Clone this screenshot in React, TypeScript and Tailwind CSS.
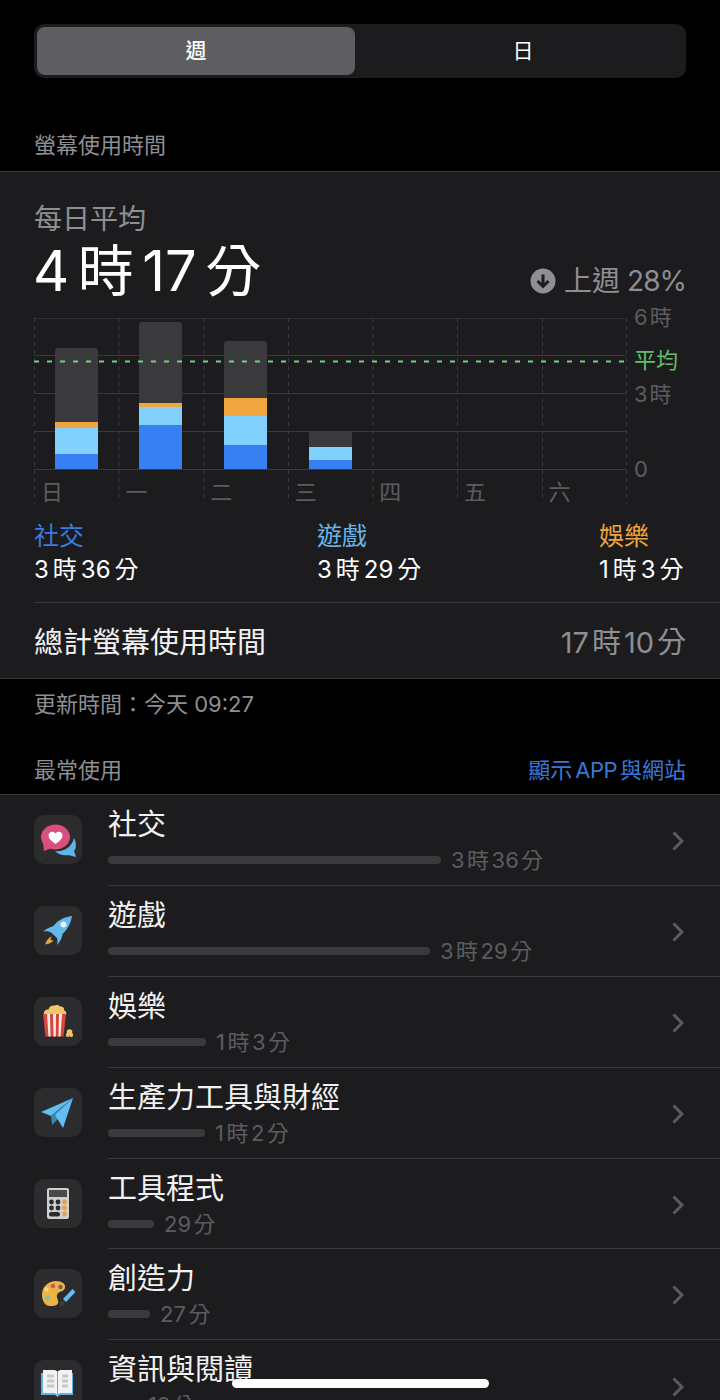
const font = "font-['Inter','Noto_Sans_CJK_TC',sans-serif]";

const bars = [
  { top: 74, orange: 6, sky: 26, blue: 15 },
  { top: 81, orange: 4, sky: 18, blue: 44 },
  { top: 57, orange: 18, sky: 29, blue: 24 },
  { top: 16, orange: 0, sky: 13, blue: 9 },
];

const days = ["日", "一", "二", "三", "四", "五", "六"];

const gridX = [0, 84.5, 169.5, 254, 338.5, 423, 508, 592];

// iOS puts a small gap between digits and CJK text
function Time({ text, gap }: { text: string; gap: string }) {
  const parts = text.match(/\d+|[^\d]+/g) ?? [];
  return (
    <>
      {parts.map((p, i) => (
        <span key={i} className={i > 0 ? gap : ""}>
          {p}
        </span>
      ))}
    </>
  );
}

function ChartLines() {
  return (
    <svg width="593" height="186" className="absolute left-0 top-0">
      <line x1="0" x2="592" y1="0.5" y2="0.5" stroke="#2e2e30" />
      {[37.5, 75.5, 113.5, 151.5].map((y) => (
        <line key={y} x1="0" x2="592" y1={y} y2={y} stroke="#3a3a3c" />
      ))}
      {gridX.map((x) => (
        <line key={x} x1={x + 0.5} x2={x + 0.5} y1="0" y2="185" stroke="#3a3a3c" strokeDasharray="4 4" />
      ))}
    </svg>
  );
}

function AvgLine() {
  return (
    <svg width="593" height="3" className="absolute left-0 top-[42px]">
      <line x1="0" x2="592" y1="1.5" y2="1.5" stroke="#72d47a" strokeWidth="2" strokeDasharray="5 8" />
    </svg>
  );
}

function Chart() {
  return (
    <div className="relative mt-[14px] ml-[34px] h-[186px] w-[660px]">
      <ChartLines />
      <div className="absolute left-0 top-0 flex h-[151px] w-[592px] items-end">
        {bars.map((b, i) => (
          <div key={i} className="flex w-[84.6px] justify-center">
            <div className="flex w-[43px] flex-col overflow-hidden rounded-t-[3px]">
              <div className="bg-[#3a3a3c]" style={{ height: b.top }} />
              <div className="bg-[#f0a63e]" style={{ height: b.orange }} />
              <div className="bg-[#82d0fe]" style={{ height: b.sky }} />
              <div className="bg-[#3780f4]" style={{ height: b.blue }} />
            </div>
          </div>
        ))}
      </div>
      <AvgLine />
      <div className="absolute left-0 top-[161px] flex w-[592px] text-[22px] leading-[26px] text-[#5c5c60]">
        {days.map((d) => (
          <div key={d} className="w-[84.6px] pl-[7px]">
            {d}
          </div>
        ))}
      </div>
      <span className="absolute left-[600px] top-[-14px] text-[22px] leading-[26px] text-[#5c5c60]">
        <Time text="6時" gap="ml-[2px]" />
      </span>
      <span className="absolute left-[600px] top-[29px] text-[22px] leading-[26px] text-[#66bb6a]">平均</span>
      <span className="absolute left-[600px] top-[63px] text-[22px] leading-[26px] text-[#5c5c60]">
        <Time text="3時" gap="ml-[2px]" />
      </span>
      <span className="absolute left-[600px] top-[138px] text-[22px] leading-[26px] text-[#5c5c60]">0</span>
    </div>
  );
}

function Legend({ name, value, color, className }: { name: string; value: string; color: string; className: string }) {
  return (
    <div className={className}>
      <div className={`text-[25px] leading-[32px] ${color}`}>{name}</div>
      <div className="text-[24px] leading-[36px] text-white">
        <Time text={value} gap="ml-[4px]" />
      </div>
    </div>
  );
}

function SocialIcon() {
  return (
    <svg width="48" height="48" viewBox="0 0 48 48">
      <path d="M40 23C43 28 42 35 40 36L42 42L34 40C30 41 25 40 21 36C30 37 38 32 40 23z" fill="#5cb6ea" />
      <ellipse cx="21.500" cy="22" rx="14.500" ry="12.500" fill="#d94f7d" />
      <path d="M9 28L10 36L18 33z" fill="#d94f7d" />
      <path d="M21.500 29C17 26 14.500 23.500 14.500 20.500C14.500 16.500 19.500 15.500 21.500 18.500C23.500 15.500 28.500 16.500 28.500 20.500C28.500 23.500 26 26 21.500 29z" fill="#fff" />
    </svg>
  );
}

function RocketIcon() {
  return (
    <svg width="48" height="48" viewBox="0 0 48 48">
      <path d="M38 10C30 11 24 14 19.500 20C16 21 12 23 9 25.500C12 25 15 25.500 17 26.500L23 32C23.500 34 23.500 37 23 39C26 36 28 32 28.500 28C34 23 37 17 38 10z" fill="#62b8ea" />
      <circle cx="29.500" cy="18.500" r="3" fill="#e6f5ff" />
      <path d="M17.500 30.500C15 31.500 12.500 34 11 38.500C14 38 17 37.500 19.500 34.500L16.500 34z" fill="#dca640" />
    </svg>
  );
}

function PopcornIcon() {
  return (
    <svg width="48" height="48" viewBox="0 0 48 48">
      <path d="M10 18C9 14 12 12 14.500 12.500C15 9.500 18 8 20.500 8.500C22 7.500 25 8 26.500 9.500C29 9.500 30.500 11 30 13C32 14 33 16 32 18z" fill="#f1c668" />
      <path d="M9 17H32L29.500 39.500H11.500z" fill="#d9463f" />
      <path d="M13 17H16L16.500 39.500H14.500zM19 17H22L21.800 39.500H19.500zM25 17H28L26.500 39.500H24.500z" fill="#f8ece4" />
      <circle cx="35.500" cy="35" r="2.800" fill="#f1c668" />
      <circle cx="33.800" cy="38" r="2" fill="#f1c668" />
      <circle cx="37.200" cy="38" r="2" fill="#f1c668" />
    </svg>
  );
}

function PlaneIcon() {
  return (
    <svg width="48" height="48" viewBox="0 0 48 48">
      <path d="M39 10L7 24L17 28z" fill="#62bdf0" />
      <path d="M39 10L17 28L18 37L23 32z" fill="#3d86ad" />
      <path d="M39 10L21 27L29 40z" fill="#62bdf0" />
    </svg>
  );
}

function CalcIcon() {
  return (
    <svg width="48" height="48" viewBox="0 0 48 48">
      <rect x="13" y="9" width="22" height="31" rx="2" fill="#cfcfcf" />
      <rect x="15" y="11" width="18" height="7" fill="#4a4a4c" />
      {[23, 29].map((y) =>
        [17.5, 24].map((x) => <circle key={`${x}-${y}`} cx={x} cy={y} r="2.400" fill="#2c2c2e" />)
      )}
      {[23, 29, 35].map((y) => (
        <circle key={y} cx="30.500" cy={y} r="2.400" fill="#e8a24c" />
      ))}
      <rect x="15" y="33" width="11" height="4.500" rx="2" fill="#2c2c2e" />
    </svg>
  );
}

function PaletteIcon() {
  return (
    <svg width="48" height="48" viewBox="0 0 48 48">
      <path d="M8 26C8 17 15 12 22 12C28 12 32 15 31 19C30 23 24 22 23 26C22 29 25 31 24 34C23 37 19 37 16 37C11 37 8 32 8 26z" fill="#edb349" />
      <circle cx="19" cy="17" r="2.200" fill="#d9534f" />
      <circle cx="12.500" cy="20.500" r="2.200" fill="#f5d76e" />
      <circle cx="13.500" cy="29" r="2.400" fill="#7fc4b4" />
      <circle cx="26.500" cy="18" r="2.200" fill="#6a6a6a" />
      <path d="M38.500 20L41.500 23L32 33L29 30z" fill="#62bdf0" />
      <path d="M25.500 37L27 31.500L30.500 34L29 36.500z" fill="#3f3f41" />
    </svg>
  );
}

function BookIcon() {
  return (
    <svg width="48" height="48" viewBox="0 0 48 48">
      <path d="M7 13H39V35H26L23.500 37L21 35H7z" fill="#62b0dc" />
      <path d="M9 10H20C22 10 23 11 23.500 12C24 11 25 10 27 10H38V33H26L23.500 34.500L21 33H9z" fill="#f2f2f2" />
      <path d="M13 16H20M13 21H20M13 26H20M28 16H34M28 21H34M28 26H34" stroke="#c8c8cc" strokeWidth="3" />
      <path d="M23.500 12V34" stroke="#9a9a9e" strokeWidth="1" />
    </svg>
  );
}

const rows = [
  { name: "社交", time: "3時36分", w: 333, icon: <SocialIcon /> },
  { name: "遊戲", time: "3時29分", w: 322, icon: <RocketIcon /> },
  { name: "娛樂", time: "1時3分", w: 98, icon: <PopcornIcon /> },
  { name: "生產力工具與財經", time: "1時2分", w: 97, icon: <PlaneIcon /> },
  { name: "工具程式", time: "29分", w: 46, icon: <CalcIcon /> },
  { name: "創造力", time: "27分", w: 42, icon: <PaletteIcon /> },
  { name: "資訊與閱讀", time: "19分", w: 30, icon: <BookIcon /> },
];

function Row({ name, time, w, icon, last }: { name: string; time: string; w: number; icon: React.ReactNode; last: boolean }) {
  return (
    <div className="flex h-[90.9px] shrink-0 pl-[34px]">
      <div className="mt-[20px] h-[49px] w-[48px] shrink-0 overflow-hidden rounded-[10px] bg-[#2c2c2e]">{icon}</div>
      <div className={`ml-[26px] flex flex-1 items-center justify-between pr-[36px] ${last ? "" : "border-b border-[#38383a]"}`}>
        <div className="self-start">
          <div className="mt-[12px] text-[29px] leading-[36px] text-[#f2f2f2]">{name}</div>
          <div className="mt-[4px] flex items-center gap-[10px]">
            <div className="h-[8px] rounded-full bg-[#3a3a3c]" style={{ width: w }} />
            <span className="text-[22px] leading-[26px] text-[#5c5c60]">
              <Time text={time} gap="ml-[2.5px]" />
            </span>
          </div>
        </div>
        <svg width="12" height="20" viewBox="0 0 12 20" fill="none" stroke="#5c5c60" strokeWidth="3" className="mt-[2px]">
          <path d="M1.500 1.500L10 10l-8.500 8.500" />
        </svg>
      </div>
    </div>
  );
}

export default function App() {
  return (
    <div className={`relative h-[1400px] w-[720px] overflow-hidden bg-black ${font}`}>
      <div className="px-[34px] pt-[24px]">
        <div className="flex h-[54px] rounded-[10px] bg-[#1c1c1e] p-[3px]">
          <div className="flex w-[318px] items-center justify-center rounded-[8px] bg-[#5e5e62] text-[21px] font-medium text-white">週</div>
          <div className="flex flex-1 items-center justify-center pl-[8px] text-[21px] text-white">日</div>
        </div>
      </div>

      <div className="mt-[52px] h-[41px] px-[34px] text-[22px] leading-[30px] text-[#8e8e93]">螢幕使用時間</div>

      <div className="h-[508px] border-y border-[#38383a] bg-[#1c1c1e]">
        <div className="px-[34px] pt-[29px] text-[28px] leading-[36px] text-[#8e8e93]">每日平均</div>
        <div className="mt-[1px] flex items-end justify-between px-[34px]">
          <div className="-ml-[1px] text-[56px] leading-[66px] text-white">
            <Time text="4時17分" gap="ml-[8.5px]" />
          </div>
          <div className="flex items-center gap-[8px] pb-[5px] text-[28px] leading-[36px] text-[#8e8e93]">
            <svg width="26" height="26" viewBox="0 0 26 26">
              <circle cx="13" cy="13" r="12.500" fill="#8e8e93" />
              <path d="M13 6.500v12M7.500 13l5.500 5.500 5.500-5.500" fill="none" stroke="#1c1c1e" strokeWidth="3" />
            </svg>
            <span>
              上週<span className="ml-[7px] tracking-[-1px]">28%</span>
            </span>
          </div>
        </div>
        <Chart />
        <div className="relative mt-[16px] ml-[34px] h-[83px] border-b border-[#38383a]">
          <Legend name="社交" value="3時36分" color="text-[#3a7bdc]" className="absolute left-0 top-0" />
          <Legend name="遊戲" value="3時29分" color="text-[#6bb5e6]" className="absolute left-[283px] top-0" />
          <Legend name="娛樂" value="1時3分" color="text-[#eea33c]" className="absolute left-[565px] top-0" />
        </div>
        <div className="flex h-[75px] items-center justify-between px-[34px] pt-[4px] text-[29px]">
          <span className="text-[#f2f2f2]">總計螢幕使用時間</span>
          <span className="text-[#8e8e93]">
            <Time text="17時10分" gap="ml-[3px]" />
          </span>
        </div>
      </div>

      <div className="h-[66px] px-[34px] pt-[10px] text-[22px] leading-[30px] text-[#8e8e93]">更新時間：今天 09:27</div>

      <div className="flex h-[49px] items-start justify-between px-[34px] pt-[10px] text-[22px] leading-[30px]">
        <span className="text-[#8e8e93]">最常使用</span>
        <span className="text-[#3a78d8]">
          顯示<span className="mx-[3px] tracking-[-0.5px]">APP</span>與網站
        </span>
      </div>

      <div className="flex flex-col border-t border-[#38383a] bg-[#1c1c1e]">
        {rows.map((r, i) => (
          <Row key={r.name} {...r} last={i === rows.length - 1} />
        ))}
      </div>

      <div className="absolute left-[232px] top-[1379px] h-[9px] w-[257px] rounded-full bg-white" />
    </div>
  );
}
